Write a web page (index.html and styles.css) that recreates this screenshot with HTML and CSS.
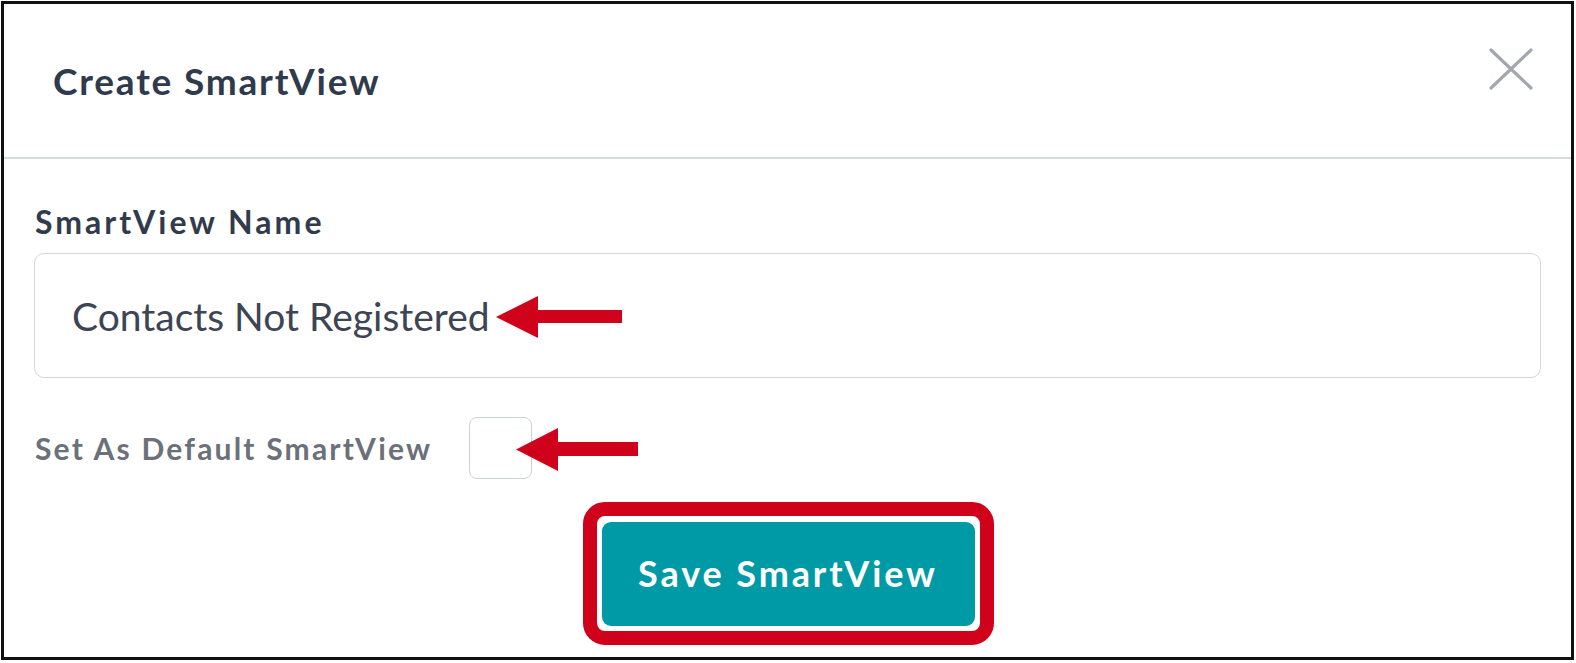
FILE: index.html
```html
<!DOCTYPE html>
<html lang="en">
<head>
<meta charset="utf-8">
<title>Create SmartView</title>
<link rel="stylesheet" href="styles.css">
</head>
<body>
<div class="dialog">
  <header class="header">
    <h1 class="title">Create SmartView</h1>
    <button class="close" aria-label="Close">
      <svg width="46" height="44" viewBox="0 0 46 44"><path d="M3 3 L43 41 M43 3 L3 41" stroke="#a3a7ad" stroke-width="3.2" stroke-linecap="round" fill="none"/></svg>
    </button>
  </header>
  <div class="body">
    <label class="label">SmartView Name</label>
    <div class="input">Contacts Not Registered</div>
    <div class="row">
      <span class="row-label">Set As Default SmartView</span>
      <span class="checkbox"></span>
    </div>
    <div class="actions">
      <div class="highlight">
        <button class="save">Save SmartView</button>
      </div>
    </div>
  </div>
  <svg class="arrow arrow-name" width="126" height="42" viewBox="0 0 126 42"><polygon points="0,21 42,0 42,42" fill="#d0021b"/><rect x="41" y="14" width="85" height="13" fill="#d0021b"/></svg>
  <svg class="arrow arrow-default" width="122" height="43" viewBox="0 0 122 43"><polygon points="0,21.5 42,0 42,43" fill="#d0021b"/><rect x="41" y="14" width="81" height="14" fill="#d0021b"/></svg>
</div>
</body>
</html>
```

FILE: styles.css
```css
* { box-sizing: border-box; }
html, body { margin: 0; padding: 0; background: #ffffff; }
body { font-family: Lato, "Open Sans", "Liberation Sans", sans-serif; }

.dialog {
  position: relative;
  margin: 1px 0 0 1px;
  width: 1573px;
  height: 659px;
  border: 3px solid #111111;
  background: #ffffff;
  display: flex;
  flex-direction: column;
}

.header {
  height: 155px;
  flex: none;
  border-bottom: 2px solid #d8dce1;
  display: flex;
  align-items: center;
  justify-content: space-between;
  padding: 0 37px 0 49px;
}

.title {
  margin: 0;
  font-size: 37px;
  font-weight: 700;
  color: #2f3a4c;
  letter-spacing: 1.8px;
  line-height: 44px;
}

.close {
  align-self: flex-start;
  margin-top: 43px;
  padding: 0;
  border: 0;
  background: none;
  width: 46px;
  height: 44px;
  display: block;
}
.close svg { display: block; }

.body {
  padding: 0 30px;
  display: flex;
  flex-direction: column;
}

.label {
  display: block;
  margin-top: 45px;
  font-size: 32px;
  line-height: 36px;
  font-weight: 700;
  color: #323b4b;
  letter-spacing: 3px;
  padding-left: 1px;
}

.input {
  margin-top: 13px;
  height: 125px;
  border: 1.5px solid #d3d7dc;
  border-radius: 10px;
  display: flex;
  align-items: center;
  padding-left: 37px;
  font-size: 39px;
  font-weight: 400;
  color: #3d4453;
  letter-spacing: 0px;
}

.row {
  margin-top: 39px;
  display: flex;
  align-items: center;
  height: 62px;
}

.row-label {
  font-size: 30px;
  line-height: 36px;
  font-weight: 700;
  color: #6b7079;
  letter-spacing: 2.2px;
  width: 435px;
  padding-left: 1px;
  white-space: nowrap;
}

.checkbox {
  width: 63px;
  height: 62px;
  border: 1.5px solid #cdd2d7;
  border-radius: 8px;
  background: #ffffff;
}

.actions {
  margin-top: 23px;
  display: flex;
  justify-content: center;
  padding-left: 1px;
}

.highlight {
  border: 14.5px solid #d0021b;
  border-radius: 22px;
  padding: 5.5px 5px;
}

.save {
  display: block;
  width: 373px;
  height: 104px;
  border: 0;
  border-radius: 9px;
  background: #009aa6;
  color: #ffffff;
  font-family: Lato, "Open Sans", "Liberation Sans", sans-serif;
  font-size: 36px;
  font-weight: 700;
  letter-spacing: 2.9px;
  padding: 0 0 2px 0;
}

.arrow { position: absolute; display: block; }
.arrow-name { left: 492px; top: 292px; }
.arrow-default { left: 512px; top: 424px; }
```
